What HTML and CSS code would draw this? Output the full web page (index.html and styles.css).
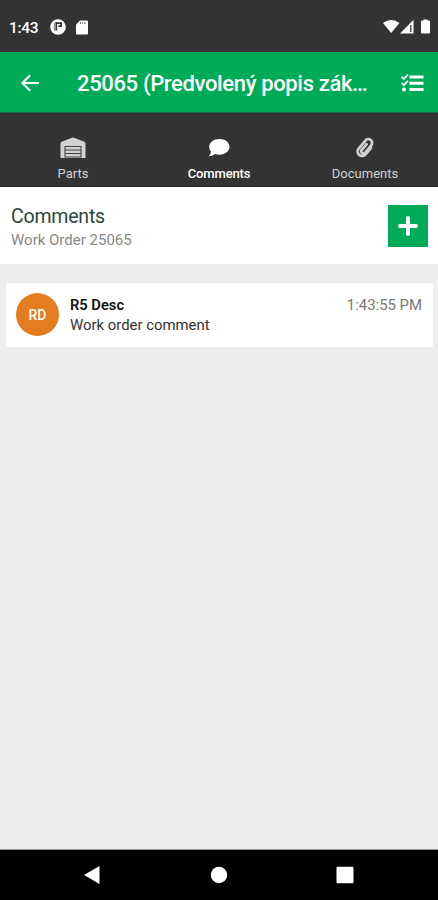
FILE: index.html
```html
<!DOCTYPE html>
<html lang="sk">
<head>
    <meta charset="UTF-8">
    <title>Comments</title>
    <link rel="stylesheet" href="styles.css">
</head>
<body>
    <div class="status-bar">
        <span class="clock">1:43</span>
        <svg class="status-app" width="16" height="16" viewBox="0 0 16 16">
            <circle cx="8" cy="8" r="7.8" fill="#fff"/>
            <path d="M6.300 3v8.500M6.300 4.200h4.900v3H8.500" fill="none" stroke="#333" stroke-width="1.700"/>
            <path d="M4.800 4Q3.200 8 5 12" fill="none" stroke="#555" stroke-width=".8"/>
        </svg>
        <svg class="status-sd" width="12" height="15" viewBox="0 0 12 15">
            <path d="M4 0.500h7a1 1 0 0 1 1 1v12a1 1 0 0 1-1 1H1a1 1 0 0 1-1-1V4.500z" fill="#fff"/>
            <path d="M4.500 2.200v1.600M6.700 2.200v1.600M9 2.200v1.600" stroke="#555" stroke-width="1"/>
        </svg>
        <svg class="status-right" width="48" height="16" viewBox="0 0 48 16">
            <path d="M0 4Q8 -2.200 16.500 4L8.200 14z" fill="#fff"/>
            <path d="M30.500 .7V14.500H17z" fill="#fff"/>
            <path d="M27.800 6v7" stroke="#333" stroke-width="1.300"/>
            <path d="M40.500 1.500V.5h4v1H46a1 1 0 0 1 1 1v11a1 1 0 0 1-1 1h-7a1 1 0 0 1-1-1v-11a1 1 0 0 1 1-1z" fill="#fff"/>
        </svg>
    </div>

    <div class="app-bar">
        <svg class="back" width="20" height="20" viewBox="0 0 20 20">
            <path d="M19 10H2.800M10.200 2.300L2.500 10l7.700 7.700" fill="none" stroke="#fff" stroke-width="2.200"/>
        </svg>
        <h1>25065 (Predvolený popis zák…</h1>
        <svg class="checklist" width="23" height="20" viewBox="0 0 23 20">
            <path d="M8.500 4H22.500M8.500 10.200H22.500M8.500 16.500H22.500" stroke="#fff" stroke-width="3"/>
            <path d="M.8 4l2 2L7 1.500M.8 10.200l2 2L7 7.800" fill="none" stroke="#fff" stroke-width="1.800"/>
            <circle cx="3" cy="16.500" r="2" fill="#fff"/>
        </svg>
    </div>

    <div class="tabs">
        <div class="tab">
            <svg width="26" height="22" viewBox="0 0 26 22">
                <path d="M.5 21V6.500Q.5 5.300 1.600 4.800L12 .7q1-.4 2 0l10.400 4.100q1.100.5 1.100 1.700V21z" fill="#d2d2d2"/>
                <path d="M5 9.500h16V20H5zM5 13h16M5 16.500h16" fill="none" stroke="#444" stroke-width="1.100"/>
            </svg>
            <span>Parts</span>
        </div>
        <div class="tab active">
            <svg width="22" height="22" viewBox="0 0 22 22">
                <path d="M11.500 2C17.300 2 21.500 5.400 21.500 9.800s-4.200 7.900-10 7.900c-1.700 0-3.200-.3-4.500-.8C5.200 18.200 3 19.200.7 19.200c1.300-1.400 2-2.900 2.200-4.500C1.700 13.300 1.200 11.700 1.200 9.800 1.200 5.400 5.700 2 11.500 2z" fill="#fff"/>
            </svg>
            <span>Comments</span>
        </div>
        <div class="tab">
            <svg width="22" height="22" viewBox="0 0 22 22">
                <g transform="rotate(40 11 11)" fill="none" stroke="#d2d2d2" stroke-width="2.700" stroke-linecap="round">
                    <path d="M15.500 7V15.500a4.500 4.500 0 0 1-9 0V5a3.800 3.800 0 0 1 7.600 0v10.300a2.300 2.300 0 0 1-4.300 0V7"/>
                </g>
            </svg>
            <span>Documents</span>
        </div>
    </div>

    <div class="section-header">
        <div>
            <h2>Comments</h2>
            <p>Work Order 25065</p>
        </div>
        <button class="add">
            <svg width="20" height="20" viewBox="0 0 20 20">
                <path d="M10 2v16M2 10h16" stroke="#fff" stroke-width="4" stroke-linecap="round"/>
            </svg>
        </button>
    </div>

    <div class="list">
        <div class="comment">
            <div class="avatar">RD</div>
            <div class="comment-body">
                <strong>R5 Desc</strong>
                <p>Work order comment</p>
            </div>
            <span class="time">1:43:55 PM</span>
        </div>
    </div>

    <div class="nav-bar">
        <svg width="18" height="20" viewBox="0 0 18 20"><path d="M1 10L16.500 1v18z" fill="#fff"/></svg>
        <svg width="18" height="18" viewBox="0 0 18 18"><circle cx="9" cy="9" r="8.200" fill="#fff"/></svg>
        <svg width="18" height="18" viewBox="0 0 18 18"><rect x=".5" y=".7" width="17" height="16.500" rx="1" fill="#fff"/></svg>
    </div>
</body>
</html>
```

FILE: styles.css
```css
* {
    box-sizing: border-box;
}

body {
    margin: 0;
    height: 900px;
    display: flex;
    flex-direction: column;
    overflow: hidden;
    font-family: Roboto, "Liberation Sans", sans-serif;
    background-color: #eee;
}

h1, h2, p {
    margin: 0;
}

.status-bar {
    height: 52px;
    display: flex;
    align-items: center;
    padding: 2px 7px 0 9px;
    background-color: #333;
    color: #fff;
}

.clock {
    width: 41px;
    padding-top: 1px;
    font-size: 15.5px;
    font-weight: 500;
    letter-spacing: -0.3px;
}

.status-sd {
    margin-left: 10px;
}

.status-right {
    margin-left: auto;
}

.app-bar {
    height: 61px;
    display: flex;
    align-items: center;
    padding: 1px 14px 0 20px;
    background-color: #00ab57;
    border-bottom: 1px solid #226644;
    color: #fff;
}

.app-bar h1 {
    margin-left: 37px;
    padding-top: 2px;
    white-space: nowrap;
    font-size: 22px;
    line-height: 30px;
    font-weight: 500;
    letter-spacing: -0.35px;
}

.checklist {
    margin-left: auto;
}

.tabs {
    height: 74px;
    display: grid;
    grid-template-columns: repeat(3, 1fr);
    padding-top: 24px;
    background-color: #333;
    border-bottom: 1px solid #222;
}

.tab {
    display: flex;
    flex-direction: column;
    align-items: center;
    color: #d2d2d2;
    font-size: 13px;
    line-height: 16px;
}

.tab span {
    margin-top: 7px;
}

.tab.active {
    color: #fff;
    font-weight: 500;
    letter-spacing: -0.15px;
}

.section-header {
    height: 77px;
    display: flex;
    justify-content: space-between;
    align-items: center;
    padding: 0 10px 0 11px;
    background-color: #fff;
}

.section-header h2 {
    padding-top: 4px;
    color: #28473f;
    font-size: 19.5px;
    line-height: 24px;
    font-weight: 400;
    letter-spacing: -0.2px;
}

.section-header p {
    color: #888;
    font-size: 15px;
    line-height: 22px;
}

.add {
    width: 40px;
    height: 42px;
    display: flex;
    align-items: center;
    justify-content: center;
    padding: 0;
    border: none;
    background-color: #00ab57;
}

.list {
    flex: 1;
    padding: 19px 5px 0 6px;
}

.comment {
    height: 64px;
    display: flex;
    padding: 10px 11px 0 10px;
    background-color: #fff;
    border-radius: 2px;
}

.avatar {
    width: 43px;
    height: 43px;
    border-radius: 50%;
    background-color: #e37d20;
    color: #fff;
    font-size: 14px;
    font-weight: 500;
    line-height: 44px;
    text-align: center;
}

.comment-body {
    flex: 1;
    margin-left: 11px;
    padding-top: 2px;
    color: #333;
    font-size: 14.9px;
    line-height: 20px;
}

.comment-body strong {
    display: block;
    color: #111;
    font-size: 14.7px;
    font-weight: 600;
}

.time {
    padding-top: 1px;
    color: #777;
    font-size: 14.9px;
    line-height: 22px;
}

.nav-bar {
    height: 51px;
    display: flex;
    align-items: center;
    justify-content: space-between;
    padding: 0 84px 0 83px;
    border-top: 1px solid #999;
    background-color: #000;
}
```
